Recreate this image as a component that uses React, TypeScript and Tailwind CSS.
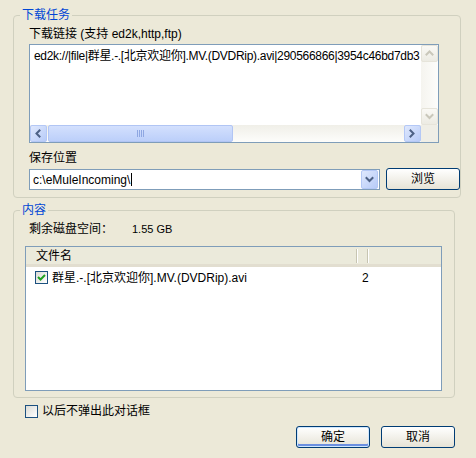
import React from "react";

const font = "font-['Liberation_Sans','Noto_Sans_CJK_SC',sans-serif] text-[12px] leading-[14px] text-black";

function Chevron({ dir, color }: { dir: "left" | "right" | "up" | "down"; color: string }) {
  const paths: Record<string, string> = {
    left: "M5.5 1.5 L2.5 4.5 L5.5 7.5",
    right: "M2.5 1.5 L5.5 4.5 L2.5 7.5",
    up: "M1.5 5.5 L4.5 2.5 L7.5 5.5",
    down: "M1.5 3 L4.5 6 L7.5 3",
  };
  return (
    <svg width="9" height="9" viewBox="0 0 9 9">
      <path d={paths[dir]} fill="none" stroke={color} strokeWidth="2" strokeLinecap="square" />
    </svg>
  );
}

function ArrowBtn({ dir, disabled }: { dir: "left" | "right" | "up" | "down"; disabled?: boolean }) {
  return disabled ? (
    <div className="w-[17px] h-[17px] flex items-center justify-center rounded-[2px] border border-[#e6e4da] bg-gradient-to-b from-[#faf9f5] to-[#ecebe3]">
      <Chevron dir={dir} color="#c9c7ba" />
    </div>
  ) : (
    <div className="w-[17px] h-[17px] flex items-center justify-center rounded-[2px] border border-[#b4c8f6] bg-gradient-to-br from-[#dfe8fd] to-[#b7cbf8]">
      <Chevron dir={dir} color="#4d6185" />
    </div>
  );
}

function XpCheck({ checked }: { checked?: boolean }) {
  return (
    <div className="w-[13px] h-[13px] shrink-0 border border-[#1c5180] bg-gradient-to-br from-[#dcdcd6] to-white flex items-center justify-center">
      {checked && (
        <svg width="9" height="9" viewBox="0 0 9 9">
          <path d="M1 4 L3.5 6.5 L8 2" fill="none" stroke="#21a121" strokeWidth="2" />
        </svg>
      )}
    </div>
  );
}

function XpButton({ children, primary }: { children: React.ReactNode; primary?: boolean }) {
  return (
    <button
      className={
        "w-[74px] h-[22px] rounded-[3px] border border-[#003c74] bg-gradient-to-b from-white to-[#e6e3d6] flex items-center justify-center " +
        (primary ? "shadow-[inset_0_0_0_1px_#cee7ff,inset_0_-2px_0_1px_#6b8fe0]" : "")
      }
    >
      {children}
    </button>
  );
}

export default function App() {
  return (
    <div className={`w-[476px] h-[458px] bg-[#ece9d8] pl-[13px] pr-[21px] flex flex-col ${font}`}>
      {/* 下载任务 */}
      <fieldset className="mt-[8px] border border-[#d0d0bf] rounded-[4px] pl-[15px] pb-[7px]">
        <legend className="-ml-[9px] px-[2px] text-[#0046d5]">下载任务</legend>
        <div className="mt-[5px]">下载链接 (支持 ed2k,http,ftp)</div>

        <div className="mt-[3px] w-[410px] h-[99px] border border-[#7f9db9] bg-white flex flex-col">
          <div className="flex flex-1 min-h-0">
            <div className="flex-1 overflow-hidden whitespace-nowrap pl-[4px] pt-[4px] tracking-[-0.3px]">
              ed2k://|file|群星.-.[北京欢迎你].MV.(DVDRip).avi|290566866|3954c46bd7db3
            </div>
            <div className="w-[17px] flex flex-col justify-between bg-gradient-to-r from-[#f5f4ef] to-[#fdfdfb]">
              <ArrowBtn dir="up" disabled />
              <ArrowBtn dir="down" disabled />
            </div>
          </div>
          <div className="h-[17px] flex">
            <div className="flex-1 flex bg-gradient-to-b from-[#f0efe8] to-[#fdfdfb]">
              <ArrowBtn dir="left" />
              <div className="ml-[1px] w-[185px] h-[17px] rounded-[2px] border border-[#b1c5f4] bg-gradient-to-b from-[#d3e0fd] to-[#bccffa] flex items-center justify-center gap-[1px]">
                {[0, 1, 2, 3].map(i => (
                  <div key={i} className="w-[1px] h-[7px] bg-[#8ea7e2]" />
                ))}
              </div>
              <div className="flex-1" />
              <ArrowBtn dir="right" />
            </div>
            <div className="w-[17px] bg-[#efeee6]" />
          </div>
        </div>

        <div className="mt-[8px]">保存位置</div>
        <div className="mt-[4px] flex items-start">
          <div className="w-[351px] h-[21px] border border-[#7f9db9] bg-white flex items-center">
            <div className="flex-1 pl-[3px] flex items-center">
              c:\eMuleIncoming\
              <span className="inline-block w-[1px] h-[13px] bg-black ml-[1px]" />
            </div>
            <div className="w-[17px] h-[19px] mr-[1px] flex items-center justify-center rounded-[2px] border border-[#b4c8f6] bg-gradient-to-br from-[#dfe8fd] to-[#b7cbf8]">
              <Chevron dir="down" color="#4d6185" />
            </div>
          </div>
          <div className="ml-[6px] -mt-[1px]">
            <XpButton>浏览</XpButton>
          </div>
        </div>
      </fieldset>

      {/* 内容 */}
      <fieldset className="mt-[5px] border border-[#d0d0bf] rounded-[4px] pl-[11px] pb-[6px]">
        <legend className="-ml-[5px] px-[2px] text-[#0046d5]">内容</legend>
        <div className="mt-[5px] flex">
          <span className="pl-[4px] w-[107px]">剩余磁盘空间：</span>
          <span className="text-[11px]">1.55 GB</span>
        </div>

        <div className="mt-[10px] w-[417px] h-[145px] border border-[#7f9db9] bg-white flex flex-col">
          <div className="h-[20px] flex items-center bg-[#ebeadb] border-b-[3px] border-[#e2ded0]">
            <div className="w-[330px] pl-[10px]">文件名</div>
            <div className="w-[2px] h-[14px] border-l border-[#c7c5b2] border-r border-r-white" />
            <div className="w-[9px]" />
            <div className="w-[2px] h-[14px] border-l border-[#c7c5b2] border-r border-r-white" />
            <div className="flex-1" />
          </div>
          <div className="h-[17px] mt-[2px] flex items-center">
            <div className="pl-[9px] w-[331px] flex items-center gap-[4px] whitespace-nowrap">
              <XpCheck checked />
              <span>群星.-.[北京欢迎你].MV.(DVDRip).avi</span>
            </div>
            <div className="pl-[5px]">2</div>
          </div>
        </div>
      </fieldset>

      <div className="mt-[6px] ml-[12px] flex items-center gap-[4px]">
        <XpCheck />
        <span>以后不弹出此对话框</span>
      </div>

      <div className="mt-[8px] flex justify-end gap-[11px]">
        <XpButton primary>确定</XpButton>
        <XpButton>取消</XpButton>
      </div>
    </div>
  );
}
